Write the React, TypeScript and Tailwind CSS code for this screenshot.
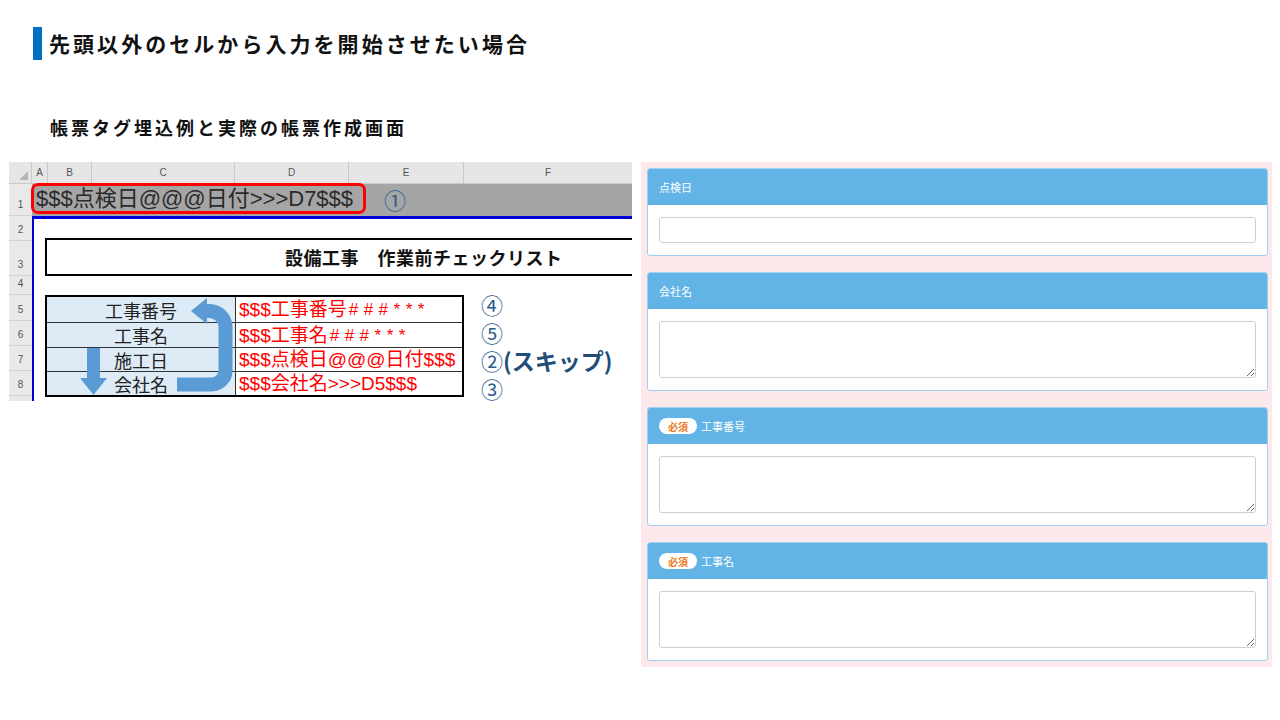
import React from "react";

const jp = "font-['Noto_Sans_CJK_JP',sans-serif]";
const xl = "font-['Liberation_Sans','Noto_Sans_CJK_JP',sans-serif]";

// ─── Spreadsheet column header ─────────────────────────────────────────────
function ColumnHeader() {
  return (
    <div className={`flex shrink-0 h-[22px] bg-[#e6e6e6] border-b border-[#c9c9c9] text-[10px] text-[#555] ${xl}`}>
      <div className="w-[23px] shrink-0 border-r border-[#c9c9c9] flex items-end justify-end p-[3px]">
        <div className="w-0 h-0 border-l-[9px] border-l-transparent border-b-[9px] border-b-[#b4b4b4]" />
      </div>
      <div className="w-[16px] shrink-0 border-r border-[#c9c9c9] flex items-center justify-center">A</div>
      <div className="w-[44px] shrink-0 border-r border-[#c9c9c9] flex items-center justify-center">B</div>
      <div className="w-[143px] shrink-0 border-r border-[#c9c9c9] flex items-center justify-center">C</div>
      <div className="w-[114px] shrink-0 border-r border-[#c9c9c9] flex items-center justify-center">D</div>
      <div className="w-[115px] shrink-0 border-r border-[#c9c9c9] flex items-center justify-center">E</div>
      <div className="flex-1 flex items-center justify-center">F</div>
    </div>
  );
}

// ─── Row numbers ───────────────────────────────────────────────────────────
function RowNumbers() {
  const rows: [string, string][] = [
    ["1", "h-[32px]"],
    ["2", "h-[25px]"],
    ["3", "h-[35px]"],
    ["4", "h-[19px]"],
    ["5", "h-[26px]"],
    ["6", "h-[25px]"],
    ["7", "h-[25px]"],
    ["8", "h-[25px]"],
    ["", "h-[25px]"],
  ];
  return (
    <div className={`w-[23px] shrink-0 flex flex-col bg-[#e9e9e9] text-[10px] text-[#555] ${xl}`}>
      {rows.map(([n, h], i) => (
        <div key={i} className={`${h} shrink-0 border-b border-[#d2d2d2] flex items-end justify-center pb-[3px]`}>
          {n}
        </div>
      ))}
    </div>
  );
}

// ─── Tag table ─────────────────────────────────────────────────────────────
function TagTable() {
  const rows = [
    { label: "工事番号", tag: "$$$工事番号", tail: "###***", h: "h-[25px]" },
    { label: "工事名", tag: "$$$工事名", tail: "###***", h: "h-[25px]" },
    { label: "施工日", tag: "$$$点検日@@@日付$$$", tail: "", h: "h-[24px]" },
    { label: "会社名", tag: "$$$会社名>>>D5$$$", tail: "", h: "h-[24px]" },
  ];
  return (
    <div className="relative w-[419px] h-[102px] shrink-0 border-2 border-black">
      {rows.map((r, i) => (
        <div key={r.label} className={`flex ${r.h} ${i > 0 ? "border-t border-[#333]" : ""}`}>
          <div className={`w-[189px] shrink-0 bg-[#ddebf7] border-r border-[#333] flex items-center justify-center text-[18px] leading-none text-[#222] ${jp}`}>
            {r.label}
          </div>
          <div className={`flex-1 flex items-center pl-[3px] text-[19px] leading-none text-[#ff0000] ${xl}`}>
            {r.tag}
            {r.tail && <span className="tracking-[5.5px] text-[17px] pl-[2px]">{r.tail}</span>}
          </div>
        </div>
      ))}
      <svg className="absolute inset-0 pointer-events-none" width="415" height="98" viewBox="2 2 415 98">
        <polygon points="42,53 55,53 55,83 62,83 48.5,100 35,83 42,83" fill="#5b9bd5" />
        <path
          d="M132 89.5 H166 A14 14 0 0 0 180.5 75.5 V32 A16 16 0 0 0 164.5 16 H158"
          fill="none"
          stroke="#5b9bd5"
          strokeWidth="14"
        />
        <polygon points="146,16 162,3 162,29" fill="#5b9bd5" />
      </svg>
    </div>
  );
}

// ─── Spreadsheet ───────────────────────────────────────────────────────────
function Spreadsheet() {
  return (
    <div className="w-[623px] h-[239px] shrink-0 overflow-hidden bg-white flex flex-col">
      <ColumnHeader />
      <div className="flex shrink-0">
        <RowNumbers />
        <div className="flex-1 flex flex-col min-w-0">
          <div className="h-[32px] shrink-0 bg-[#a5a5a5] flex items-center">
            <div className={`-ml-[1px] -mt-[3px] h-[31px] w-[335px] border-[3px] border-[#ff0000] rounded-[7px] flex items-center pl-[2px] text-[22px] leading-none text-[#2b2b2b] ${xl}`}>
              $$$点検日@@@日付&gt;&gt;&gt;D7$$$
            </div>
            <span className={`ml-[18px] -mt-[3px] text-[22px] leading-none text-[#2e5d8e] ${jp}`}>①</span>
          </div>
          <div className="h-[3px] shrink-0 bg-[#0000d8]" />
          <div className="flex-1 border-l-[2px] border-[#0000d8] flex flex-col pl-[11px]">
            <div className="h-[19px] shrink-0" />
            <div className="h-[38px] w-[700px] shrink-0 border-2 border-black flex items-center pl-[238px]">
              <span className={`text-[18px] font-bold text-[#111] tracking-[0.5px] ${jp}`}>設備工事　作業前チェックリスト</span>
            </div>
            <div className="h-[19px] shrink-0" />
            <div className="flex">
              <TagTable />
              <div className={`ml-[17px] -mt-[5px] flex flex-col text-[22px] leading-none text-[#2e5d8e] ${jp}`}>
                <div className="h-[28px] flex items-center">④</div>
                <div className="h-[28px] flex items-center">⑤</div>
                <div className="h-[28px] flex items-center">
                  ②<span className="font-bold text-[#1f4e79] text-[23px]">(スキップ)</span>
                </div>
                <div className="h-[28px] flex items-center">③</div>
              </div>
            </div>
          </div>
        </div>
      </div>
    </div>
  );
}

// ─── Form card ─────────────────────────────────────────────────────────────
function FormCard({ label, required, multiline }: { label: string; required?: boolean; multiline?: boolean }) {
  return (
    <div className="bg-white border border-[#a3cfee] rounded-[3px] overflow-hidden">
      <div className={`h-[36px] bg-[#63b4e6] flex items-center gap-[4px] pl-[11px] text-[11px] text-white ${jp}`}>
        {required && (
          <span className="bg-white rounded-full h-[16px] w-[38px] flex items-center justify-center text-[10px] font-bold text-[#ec7a1c]">
            必須
          </span>
        )}
        <span>{label}</span>
      </div>
      <div className="px-[11px] py-[12px]">
        {multiline ? (
          <textarea className="block w-full h-[57px] border border-[#cfcfcf] rounded-[3px] outline-none" />
        ) : (
          <input type="text" className="block w-full h-[26px] border border-[#cfcfcf] rounded-[3px] outline-none" />
        )}
      </div>
    </div>
  );
}

export default function App() {
  return (
    <div className={`w-[1280px] h-[720px] bg-white overflow-hidden ${jp}`}>
      {/* Title */}
      <div className="flex items-center pt-[27px] pl-[33px] gap-[7px]">
        <div className="w-[9px] h-[33px] bg-[#0070c0]" />
        <h1 className="text-[21px] font-bold text-[#111] tracking-[3.05px] leading-none">
          先頭以外のセルから入力を開始させたい場合
        </h1>
      </div>
      <h2 className="mt-[58px] ml-[50px] text-[18px] font-bold text-[#111] tracking-[3px] leading-none">
        帳票タグ埋込例と実際の帳票作成画面
      </h2>

      <div className="flex items-start mt-[26px] pl-[9px] gap-[9px]">
        <Spreadsheet />
        <div className="w-[631px] bg-[#fde8eb] pt-[6px] pb-[6px] pl-[6px] pr-[4px] flex flex-col gap-[16px]">
          <FormCard label="点検日" />
          <FormCard label="会社名" multiline />
          <FormCard label="工事番号" required multiline />
          <FormCard label="工事名" required multiline />
        </div>
      </div>
    </div>
  );
}
